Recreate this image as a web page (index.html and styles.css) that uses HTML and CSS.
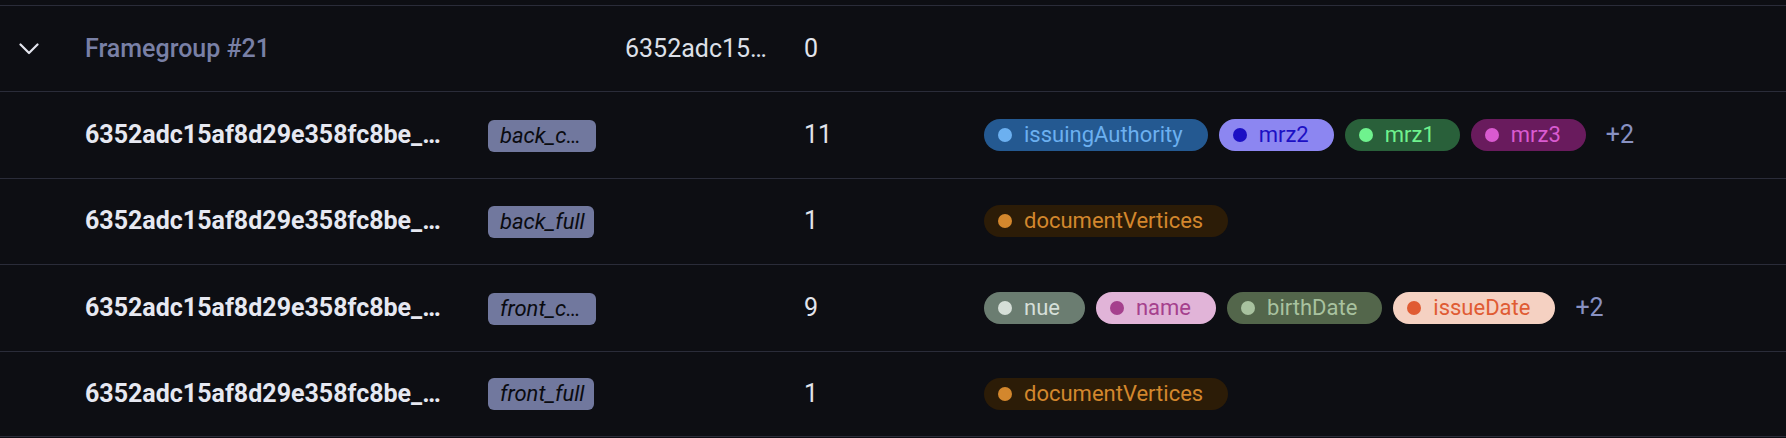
FILE: index.html
```html
<!DOCTYPE html>
<html>
<head>
<meta charset="utf-8">
<link rel="stylesheet" href="styles.css">
</head>
<body>
<div class="table">
  <div class="stub"></div>

  <div class="row">
    <div class="cell c-toggle">
      <svg class="chevron" width="20" height="12" viewBox="0 0 20 12"><path d="M1.5 1.5 L10 10 L18.5 1.5" fill="none" stroke="#e3e5ee" stroke-width="2.2" stroke-linecap="round" stroke-linejoin="round"/></svg>
    </div>
    <div class="cell c-name group-name">Framegroup #21</div>
    <div class="cell c-type"></div>
    <div class="cell c-id"><span class="ellip">6352adc15af8d29e358fc8be</span></div>
    <div class="cell c-count">0</div>
    <div class="cell c-tags"></div>
  </div>

  <div class="row">
    <div class="cell c-toggle"></div>
    <div class="cell c-name"><span class="ellip frame-name">6352adc15af8d29e358fc8be_back_cropped</span></div>
    <div class="cell c-type"><span class="type-pill">back_cropped</span></div>
    <div class="cell c-id"></div>
    <div class="cell c-count">11</div>
    <div class="cell c-tags">
      <span class="chip chip-blue"><i class="dot"></i>issuingAuthority</span>
      <span class="chip chip-violet"><i class="dot"></i>mrz2</span>
      <span class="chip chip-green"><i class="dot"></i>mrz1</span>
      <span class="chip chip-magenta"><i class="dot"></i>mrz3</span>
      <span class="more">+2</span>
    </div>
  </div>

  <div class="row">
    <div class="cell c-toggle"></div>
    <div class="cell c-name"><span class="ellip frame-name">6352adc15af8d29e358fc8be_back_full</span></div>
    <div class="cell c-type"><span class="type-pill">back_full</span></div>
    <div class="cell c-id"></div>
    <div class="cell c-count">1</div>
    <div class="cell c-tags">
      <span class="chip chip-orange"><i class="dot"></i>documentVertices</span>
    </div>
  </div>

  <div class="row">
    <div class="cell c-toggle"></div>
    <div class="cell c-name"><span class="ellip frame-name">6352adc15af8d29e358fc8be_front_cropped</span></div>
    <div class="cell c-type"><span class="type-pill">front_cropped</span></div>
    <div class="cell c-id"></div>
    <div class="cell c-count">9</div>
    <div class="cell c-tags">
      <span class="chip chip-sage"><i class="dot"></i>nue</span>
      <span class="chip chip-pink"><i class="dot"></i>name</span>
      <span class="chip chip-olive"><i class="dot"></i>birthDate</span>
      <span class="chip chip-peach"><i class="dot"></i>issueDate</span>
      <span class="more">+2</span>
    </div>
  </div>

  <div class="row last">
    <div class="cell c-toggle"></div>
    <div class="cell c-name"><span class="ellip frame-name">6352adc15af8d29e358fc8be_front_full</span></div>
    <div class="cell c-type"><span class="type-pill">front_full</span></div>
    <div class="cell c-id"></div>
    <div class="cell c-count">1</div>
    <div class="cell c-tags">
      <span class="chip chip-orange"><i class="dot"></i>documentVertices</span>
    </div>
  </div>
</div>
</body>
</html>
```

FILE: styles.css
```css
html, body {
  margin: 0;
  padding: 0;
  background: #0d0e13;
}
body {
  font-family: Roboto, "Liberation Sans", Arial, sans-serif;
  color: #e2e4ec;
  overflow: hidden;
}
.table {
  width: 1786px;
}
.stub {
  height: 5px;
}
.row {
  display: grid;
  grid-template-columns: 85px 403px 137px 179px 180px 1fr;
  align-items: center;
  height: 86.4px;
  box-sizing: border-box;
  border-top: 1px solid #2a2c39;
}
.row.last {
  border-bottom: 1px solid #2a2c39;
}
.cell {
  min-width: 0;
  font-size: 25px;
  line-height: 32px;
  white-space: nowrap;
}
.c-toggle {
  padding-left: 19px;
  display: flex;
  align-items: center;
}
.chevron {
  display: block;
}
.c-name {
  padding-right: 42px;
}
.group-name {
  color: #7980a6;
  font-weight: 500;
}
.ellip {
  display: block;
  overflow: hidden;
  text-overflow: ellipsis;
  white-space: nowrap;
}
.frame-name {
  font-weight: 700;
  color: #e6e8f1;
}
.c-id {
  padding-right: 31px;
  color: #dde0e9;
}
.c-count {
  color: #e2e4ec;
}
.type-pill {
  display: inline-block;
  box-sizing: border-box;
  max-width: 108px;
  height: 32px;
  line-height: 32px;
  padding: 0 9px 0 12px;
  border-radius: 6px;
  background: #71789e;
  color: #0a0b10;
  font-size: 22px;
  font-style: italic;
  overflow: hidden;
  text-overflow: ellipsis;
  white-space: nowrap;
  vertical-align: middle;
}
.c-tags {
  display: flex;
  align-items: center;
  gap: 11px;
}
.chip {
  display: inline-flex;
  align-items: center;
  gap: 12px;
  height: 32px;
  box-sizing: border-box;
  padding: 0 25px 0 14px;
  border-radius: 16px;
  font-size: 22px;
  line-height: 32px;
}
.dot {
  width: 14px;
  height: 14px;
  border-radius: 50%;
  background: currentColor;
  flex: none;
}
.more {
  margin-left: 9px;
  font-size: 25px;
  color: #8891c2;
}
.chip-blue { background: #245991; color: #6cb0f0; }
.chip-violet { background: #8c86f1; color: #1c10c4; }
.chip-green { background: #29603a; color: #6ff28e; }
.chip-magenta { background: #691b5d; color: #d95ad0; }
.chip-orange { background: #2c1c07; color: #d3872d; }
.chip-sage { background: #6b7d71; color: #d6dfd8; }
.chip-pink { background: #e1b4d8; color: #a5408d; }
.chip-olive { background: #53664b; color: #a8c29f; }
.chip-peach { background: #f5d1c2; color: #e05b33; }
```
